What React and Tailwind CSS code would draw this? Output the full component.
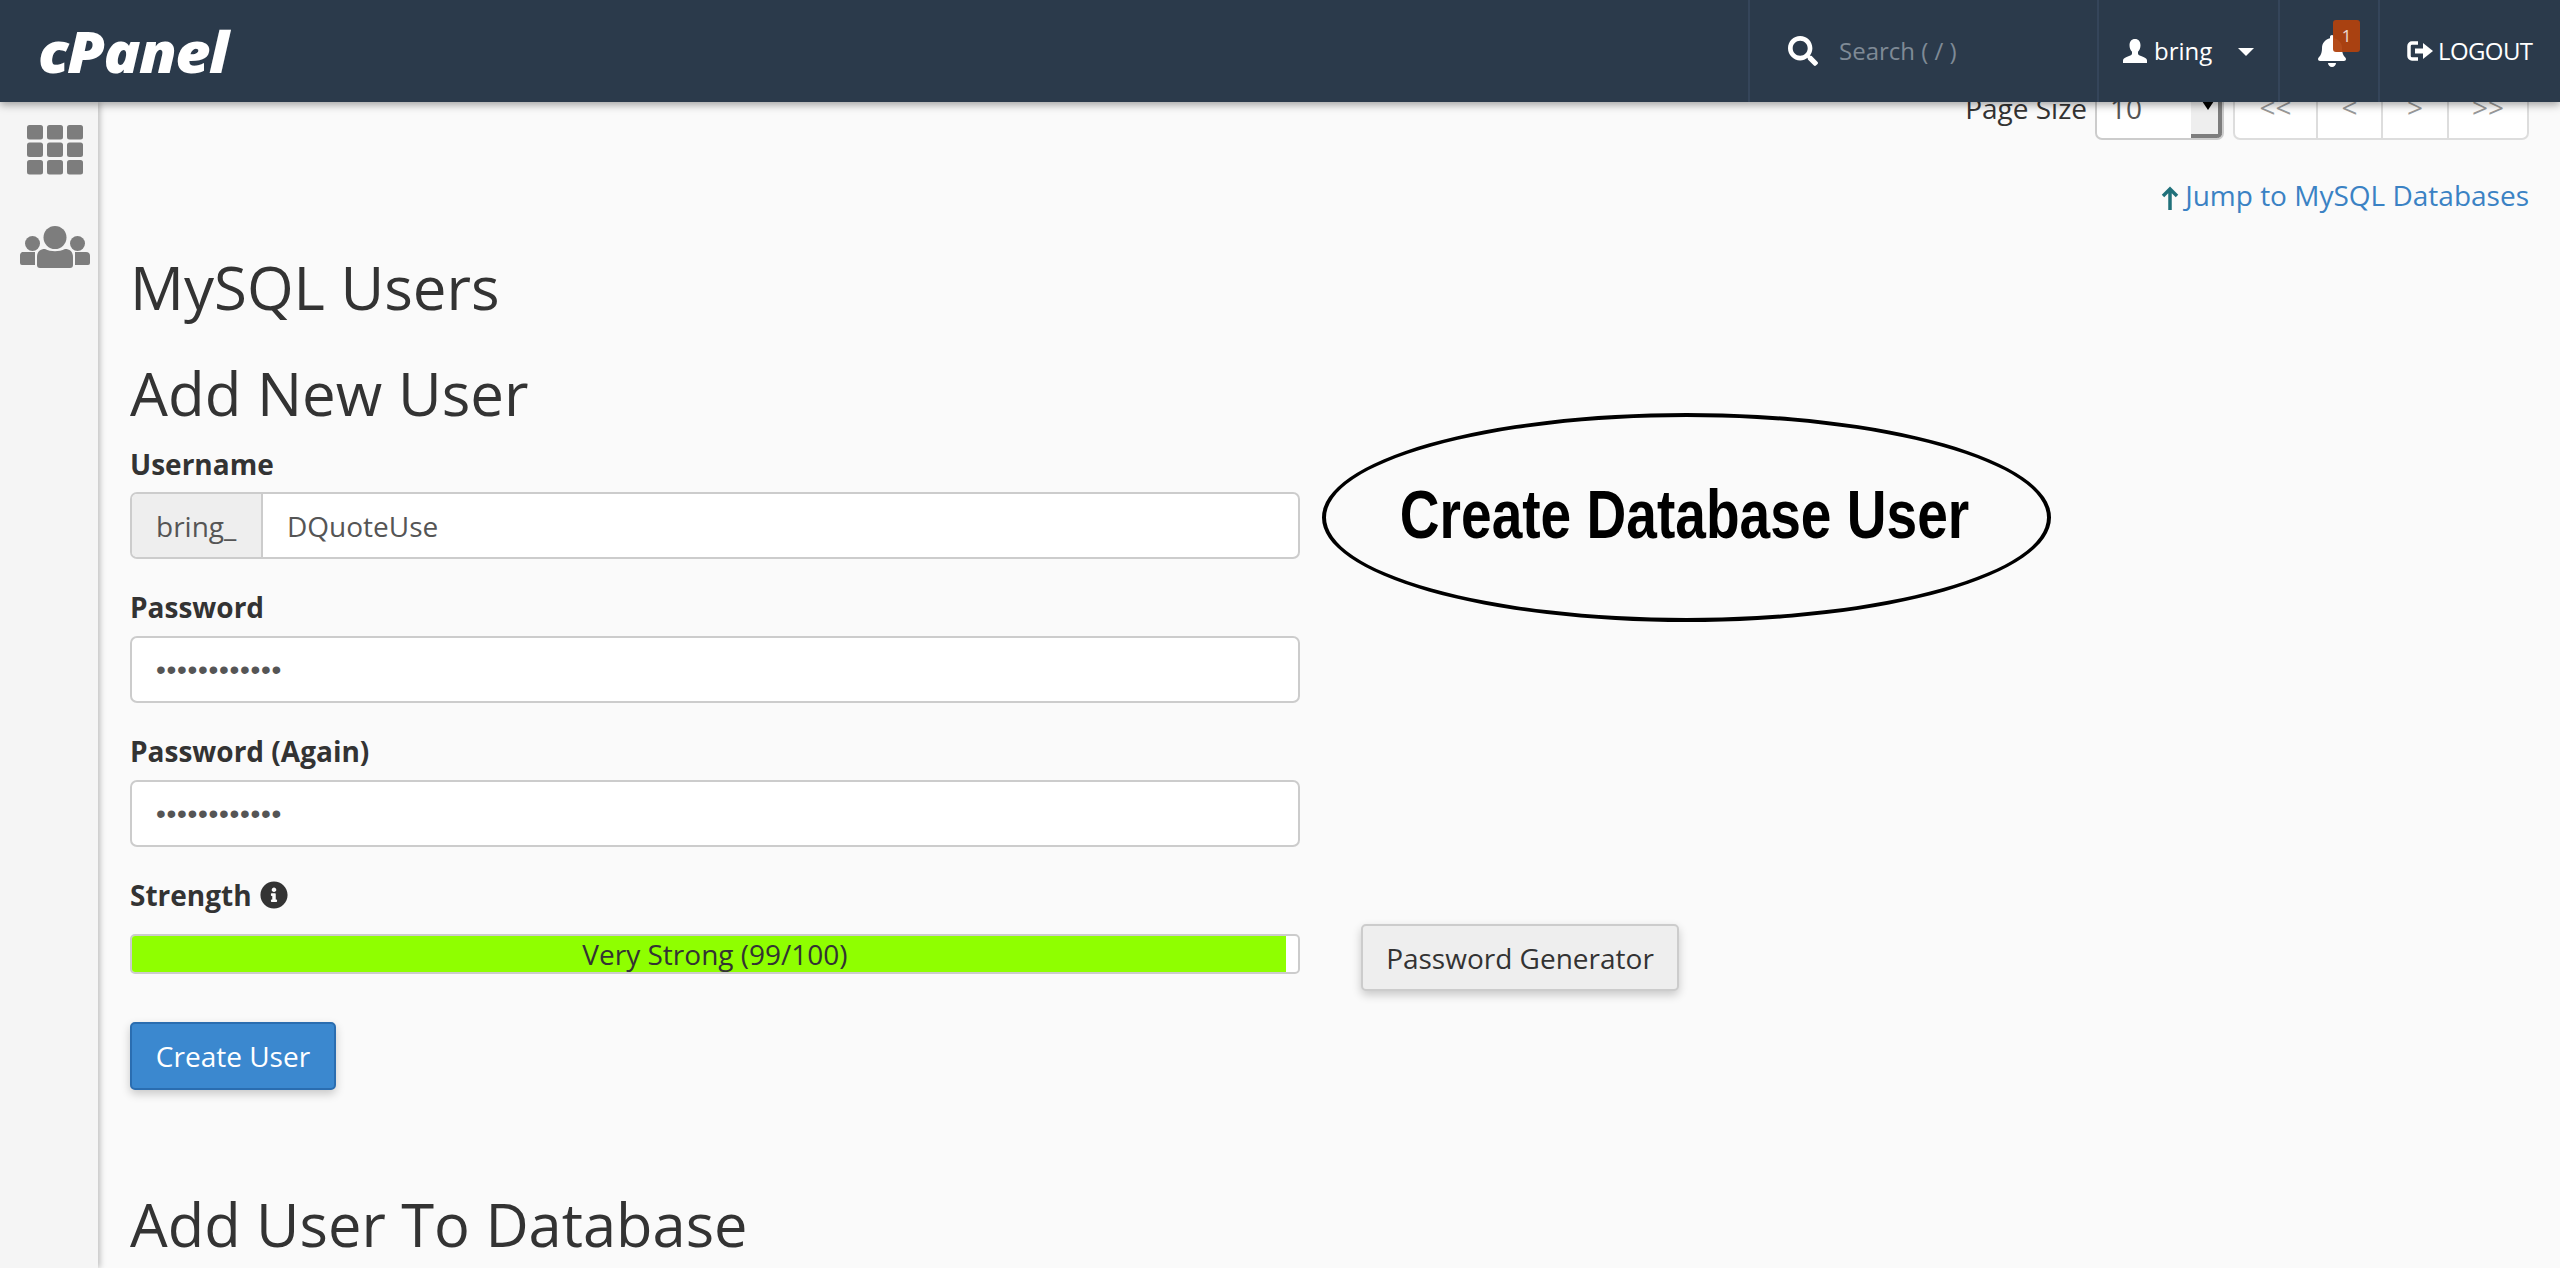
import React from 'react';
import { FaSearch, FaBell, FaInfoCircle } from 'react-icons/fa';

const GridIcon = () => (
    <svg width="56" height="50" viewBox="0 0 56 50" fill="#7d7d7d">
        {[0, 17.5, 35].map(y => [0, 20, 40].map(x => (
            <rect key={`${x}-${y}`} x={x} y={y} width={16} height={14.5} rx="2.5" />
        )))}
    </svg>
);

const UsersIcon = () => (
    <svg width="70" height="42" viewBox="0 0 70 42" fill="#7d7d7d">
        <circle cx="35" cy="11.5" r="11.5" />
        <circle cx="12.5" cy="17.5" r="7.5" />
        <circle cx="57.5" cy="17.5" r="7.5" />
        <path d="M2 26h13v13H2a2 2 0 0 1-2-2v-7a4 4 0 0 1 2-4zM55 26h11a4 4 0 0 1 4 4v7a2 2 0 0 1-2 2H55z" />
        <path d="M25 23c6 3 14 3 20 0 5 0 8 3 8 8v8a3 3 0 0 1-3 3H20a3 3 0 0 1-3-3v-8c0-5 3-8 8-8z" />
    </svg>
);

const UserIcon = () => (
    <svg width="24" height="24" viewBox="0 0 24 24" fill="white">
        <path d="M12 0c3.600 0 5.500 2.700 5.500 6.200 0 2.600-1 5-2.500 6.600v1.700c0 1.300 1 1.800 3 2.600 3.500 1.300 6 2.300 6 4.400V24H0v-2.500c0-2.100 2.500-3.100 6-4.400 2-.8 3-1.300 3-2.600v-1.700C7.500 11.200 6.500 8.800 6.500 6.200 6.500 2.700 8.400 0 12 0z" />
    </svg>
);

const LogoutIcon = () => (
    <svg width="27" height="20" viewBox="0 0 27 20" fill="none">
        <path d="M11 2H5a3 3 0 0 0-3 3v10a3 3 0 0 0 3 3h6" stroke="white" strokeWidth="3.5" />
        <path d="M8 7.500h8V2l10 8-10 8v-5.500H8z" fill="white" />
    </svg>
);

const Label = ({ children }) => (
    <label className="block text-[28px] leading-[36px] font-bold text-[#333]">{children}</label>
);

const Password = () => (
    <div className="h-[67px] bg-white border-2 border-[#ccc] rounded-[7px] flex items-center px-[24px] font-['Liberation_Sans',sans-serif] text-[28px] tracking-[0.7px] text-[#555]">
        ••••••••••••
    </div>
);

const App = () => {
    return (
        <div className="h-screen overflow-hidden flex flex-col bg-[#fafafa] font-['Open_Sans',sans-serif] text-[#333]">

            {/* HEADER */}
            <header className="relative z-10 h-[102px] shrink-0 bg-[#2b3a4b] shadow-[0_3px_8px_rgba(0,0,0,0.35)] flex items-stretch text-white">
                <div className="pl-[38px] flex items-center flex-1">
                    <span className="italic font-extrabold text-[56px] tracking-[-1.5px] leading-none origin-left scale-x-[1.09]">cPanel</span>
                </div>
                <div className="w-[349px] border-l-2 border-[#35455a] flex items-center pl-[38px] gap-[21px]">
                    <FaSearch size={30} />
                    <span className="text-[24px] text-[#7f8a96]">Search ( / )</span>
                </div>
                <div className="w-[181px] border-l-2 border-[#35455a] flex items-center pl-[24px]">
                    <UserIcon />
                    <span className="text-[24px] ml-[7px]">bring</span>
                    <span className="ml-[26px] mt-[2px] w-0 h-0 border-x-[8px] border-x-transparent border-t-[8px] border-t-white"></span>
                </div>
                <div className="relative w-[100px] border-l-2 border-[#35455a] flex items-center pl-[36px]">
                    <FaBell size={32} />
                    <span className="absolute left-[53px] top-[20px] w-[27px] h-[32px] rounded-[3px] bg-[#b0410e]/95 text-[17px] text-white/80 flex items-center justify-center">1</span>
                </div>
                <div className="flex-none w-[182px] border-l-2 border-[#35455a] flex items-center pl-[27px]">
                    <LogoutIcon />
                    <span className="text-[24px] ml-[4px] tracking-[-0.6px]">LOGOUT</span>
                </div>
            </header>

            <div className="flex-1 min-h-0 flex">
                {/* SIDEBAR */}
                <aside className="w-[98px] shrink-0 bg-[#f5f5f5] shadow-[2px_0_6px_rgba(0,0,0,0.25)] flex flex-col items-center pt-[23px] pl-[12px] gap-[51px]">
                    <GridIcon />
                    <UsersIcon />
                </aside>

                {/* CONTENT */}
                <main className="relative flex-1 min-w-0 pl-[32px] pr-[31px] -mt-[12px]">
                    <div className="h-[50px] flex justify-end items-stretch">
                        <span className="text-[28px] leading-[36px] text-[#333] mr-[8px]">Page Size</span>
                        <div className="relative w-[129px] bg-white border-2 border-[#ccc] rounded-[7px] overflow-hidden pl-[13px] text-[28px] leading-[32px] text-[#555]">
                            10
                            <div className="absolute right-0 top-0 bottom-0 w-[31px] bg-[#eee] border-r-[4px] border-b-[4px] border-[#7d7d7d]"></div>
                            <div className="absolute right-[8px] top-[9px] w-0 h-0 border-x-[6px] border-x-transparent border-t-[9px] border-t-black"></div>
                        </div>
                        <div className="ml-[9px] w-[296px] bg-white border-2 border-[#ddd] rounded-[7px] grid grid-cols-[81px_65px_66px_1fr] text-[28px] leading-[30px] text-[#999] text-center">
                            <span>&lt;&lt;</span>
                            <span className="border-l-2 border-[#ddd]">&lt;</span>
                            <span className="border-l-2 border-[#ddd]">&gt;</span>
                            <span className="border-l-2 border-[#ddd]">&gt;&gt;</span>
                        </div>
                    </div>

                    <div className="mt-[37px] flex justify-end items-center h-[36px] text-[28px] text-[#3a82c4]">
                        <svg className="mr-[6px] mt-[5px]" width="18" height="24" viewBox="0 0 18 24" fill="none" stroke="#20707a" strokeWidth="3.5">
                            <path d="M9 24V3M2 10l7-7 7 7" />
                        </svg>
                        Jump to MySQL Databases
                    </div>

                    <h1 className="mt-[38px] text-[60px] leading-[72px] text-[#333]">MySQL Users</h1>
                    <h2 className="mt-[34px] text-[60px] leading-[72px] text-[#333]">Add New User</h2>

                    <div className="w-[1170px] mt-[17px]">
                        <Label>Username</Label>
                        <div className="mt-[10px] h-[67px] bg-white border-2 border-[#ccc] rounded-[7px] flex overflow-hidden text-[28px] text-[#555]">
                            <div className="w-[131px] bg-[#eee] border-r-2 border-[#ccc] flex items-center pl-[24px]">bring_</div>
                            <div className="flex items-center pl-[24px]">DQuoteUse</div>
                        </div>

                        <div className="mt-[30px]"><Label>Password</Label></div>
                        <div className="mt-[11px]"><Password /></div>

                        <div className="mt-[30px]"><Label>Password (Again)</Label></div>
                        <div className="mt-[11px]"><Password /></div>

                        <div className="mt-[30px] flex items-center gap-[8px]">
                            <Label>Strength</Label>
                            <FaInfoCircle size={28} className="text-[#333]" />
                        </div>
                    </div>

                    <div className="flex items-start mt-[21px]">
                        <div className="relative w-[1170px] h-[40px] bg-white border-2 border-[#ccc] rounded-[5px] overflow-hidden">
                            <div className="h-full w-[1154px] bg-[#8fff00]"></div>
                            <div className="absolute inset-0 flex items-center justify-center text-[28px] text-[#333]">Very Strong (99/100)</div>
                        </div>
                        <button className="ml-[61px] -mt-[10px] w-[318px] h-[67px] bg-[#eee] border-2 border-[#ccc] rounded-[5px] shadow-[0_4px_10px_rgba(0,0,0,0.2)] text-[28px] text-[#333]">Password Generator</button>
                    </div>

                    <button className="block mt-[31px] w-[206px] h-[68px] bg-[#3b88cf] border-2 border-[#2a6db0] rounded-[5px] shadow-[0_4px_10px_rgba(0,0,0,0.2)] text-[28px] text-white">Create User</button>

                    <h2 className="mt-[98px] text-[59.6px] leading-[72px] text-[#333]">Add User To Database</h2>

                    {/* Annotation over the form */}
                    <div className="absolute left-[1224px] top-[323px] w-[729px] h-[209px] rounded-[50%] border-[4px] border-black flex items-center justify-center pb-[8px]">
                        <span className="font-['Liberation_Sans',sans-serif] font-bold text-[68px] leading-none text-black whitespace-nowrap scale-x-[0.81] -translate-x-[2px]">Create Database User</span>
                    </div>
                </main>
            </div>
        </div>
    );
};

export default App;
